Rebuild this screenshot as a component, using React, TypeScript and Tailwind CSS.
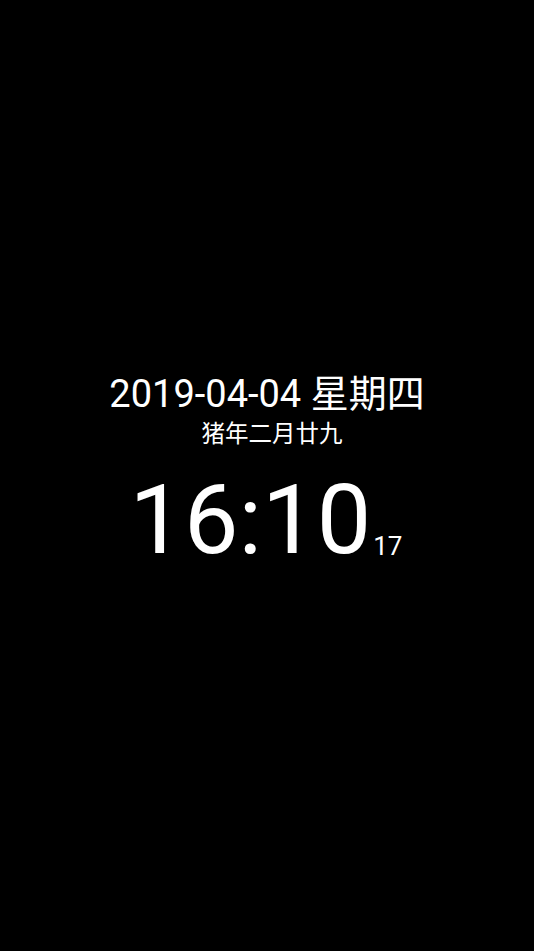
export default function App() {
  return (
    <div
      className="min-h-screen w-full bg-black text-white flex flex-col items-center pt-[375px]"
      style={{ fontFamily: 'Roboto, "Noto Sans CJK SC", sans-serif' }}
    >
      {/* Date */}
      <div className="text-[38px] leading-none">2019-04-04 星期四</div>

      {/* Lunar date */}
      <div className="mt-[10px] pl-[10px] text-[23.5px] leading-none">猪年二月廿九</div>

      {/* Time */}
      <div className="mt-[25px] pr-[2px] flex items-baseline">
        <span className="text-[97px] leading-none">16:10</span>
        <span className="ml-[2px] text-[26px] leading-none translate-y-[2px]">17</span>
      </div>
    </div>
  )
}
